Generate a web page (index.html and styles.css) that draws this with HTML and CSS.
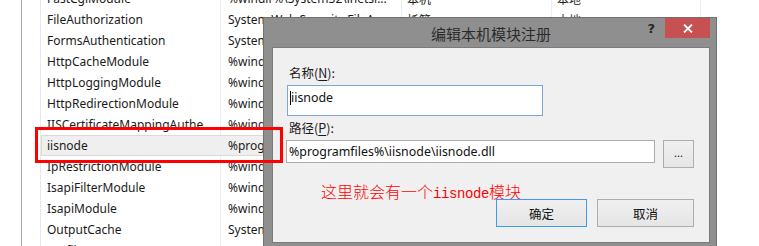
FILE: index.html
```html
<!DOCTYPE html>
<html lang="zh-CN">
<head>
<meta charset="utf-8">
<title>编辑本机模块注册</title>
<link rel="stylesheet" href="styles.css">
</head>
<body>
<div class="screen">
  <div class="pane">
    <div class="gutter"></div>
    <div class="list">
      <div class="row"><span class="c1">FastCgiModule</span><span class="c2">%windir%\System32\inetsr...</span><span class="c3">本机</span><span class="c4">本地</span></div>
      <div class="row"><span class="c1">FileAuthorization</span><span class="c2">System.Web.Security.FileA...</span><span class="c3">托管</span><span class="c4">本地</span></div>
      <div class="row"><span class="c1">FormsAuthentication</span><span class="c2">System.Web.Security.Form...</span><span class="c3">托管</span><span class="c4">本地</span></div>
      <div class="row"><span class="c1">HttpCacheModule</span><span class="c2">%windir%\System32\inetsr...</span><span class="c3">本机</span><span class="c4">本地</span></div>
      <div class="row"><span class="c1">HttpLoggingModule</span><span class="c2">%windir%\System32\inetsr...</span><span class="c3">本机</span><span class="c4">本地</span></div>
      <div class="row"><span class="c1">HttpRedirectionModule</span><span class="c2">%windir%\System32\inetsr...</span><span class="c3">本机</span><span class="c4">本地</span></div>
      <div class="row"><span class="c1">IISCertificateMappingAuthenticationModule</span><span class="c2">%windir%\System32\inetsr...</span><span class="c3">本机</span><span class="c4">本地</span></div>
      <div class="row selected"><span class="c1">iisnode</span><span class="c2">%programfiles%\iisnode\iis...</span><span class="c3">本机</span><span class="c4">本地</span></div>
      <div class="row"><span class="c1">IpRestrictionModule</span><span class="c2">%windir%\System32\inetsr...</span><span class="c3">本机</span><span class="c4">本地</span></div>
      <div class="row"><span class="c1">IsapiFilterModule</span><span class="c2">%windir%\System32\inetsr...</span><span class="c3">本机</span><span class="c4">本地</span></div>
      <div class="row"><span class="c1">IsapiModule</span><span class="c2">%windir%\System32\inetsr...</span><span class="c3">本机</span><span class="c4">本地</span></div>
      <div class="row"><span class="c1">OutputCache</span><span class="c2">System.Web.Caching.Output...</span><span class="c3">托管</span><span class="c4">本地</span></div>
      <div class="row"><span class="c1">Profile</span><span class="c2">System.Web.Profile.Profile...</span><span class="c3">托管</span><span class="c4">本地</span></div>
    </div>
  </div>

  <div class="dialog">
    <div class="titlebar">
      <span class="title">编辑本机模块注册</span>
      <span class="help">?</span>
      <span class="close"><svg width="10" height="9" viewBox="0 0 10 9"><path d="M1 0.5 L9 8.5 M9 0.5 L1 8.5" stroke="#fff" stroke-width="1.8" fill="none"/></svg></span>
    </div>
    <div class="client">
      <div class="label">名称(<u>N</u>):</div>
      <div class="input name"><span class="caret"></span>iisnode</div>
      <div class="label">路径(<u>P</u>):</div>
      <div class="pathrow">
        <div class="input path">%programfiles%\iisnode\iisnode.dll</div>
        <div class="btn browse">...</div>
      </div>
      <div class="note">这里就会有一个<span class="mono">iisnode</span>模块</div>
      <div class="buttons">
        <div class="btn ok">确定</div>
        <div class="btn cancel">取消</div>
      </div>
    </div>
  </div>

  <div class="mark"></div>
</div>
</body>
</html>
```
FILE: styles.css
```css
html, body {
  margin: 0;
  padding: 0;
  background: #fff;
}
.screen {
  position: relative;
  width: 759px;
  height: 246px;
  overflow: hidden;
  background: #fff;
  font-family: "Noto Sans", "Noto Sans CJK SC", sans-serif;
  font-size: 12px;
  color: #1a1a1a;
}

/* background list */
.pane {
  display: flex;
  height: 100%;
}
.gutter {
  width: 18px;
  margin-left: 21px;
  border-left: 1px solid #a9a9a9;
  border-right: 1px solid #e9e9e9;
  flex: none;
}
.list {
  margin-top: -12px;
  width: 660px;
}
.row {
  display: grid;
  grid-template-columns: 180px 181px 150px 149px;
  height: 21px;
  line-height: 21px;
  box-sizing: border-box;
  background-image:
    linear-gradient(#eaeff7, #eaeff7),
    linear-gradient(#eaeff7, #eaeff7),
    linear-gradient(#eaeff7, #eaeff7),
    linear-gradient(#eaeff7, #eaeff7);
  background-size: 1px 100%;
  background-repeat: no-repeat;
  background-position: 179px 0, 360px 0, 510px 0, 659px 0;
}
.row span {
  white-space: nowrap;
  overflow: hidden;
}
.c1 { padding-left: 6px; margin-right: 17px; }
.c2 { padding-left: 7px; margin-right: 1px; }
.c3, .c4 { padding-left: 5px; margin-right: 1px; font-family: "Noto Sans CJK SC", sans-serif; font-size: 12px; }
.row.selected {
  background-color: #efefef;
  box-shadow: inset 0 0 0 1px #dadada;
}

/* dialog */
.dialog {
  position: absolute;
  left: 263px;
  top: 17px;
  width: 454px;
  height: 240px;
  box-sizing: border-box;
  background: #8f8f8f;
  border: 1px solid #707070;
  padding: 0 6px 0 8px;
}
.titlebar {
  position: relative;
  height: 29px;
  display: flex;
  align-items: center;
  justify-content: center;
}
.title {
  font-family: "Noto Sans CJK SC", sans-serif;
  font-size: 15px;
  color: #2b2b2b;
  margin-top: 1px;
}
.help {
  position: absolute;
  right: 55px;
  top: 3px;
  font-family: "DejaVu Sans", sans-serif;
  font-weight: bold;
  font-size: 13px;
  color: #262626;
}
.close {
  position: absolute;
  right: 0;
  top: 0;
  width: 45px;
  height: 20px;
  background: #c75050;
  display: flex;
  align-items: center;
  justify-content: center;
}
.client {
  background: #f0f0f0;
  border: 1px solid #7b7b7b;
  height: 196px;
  box-sizing: border-box;
  padding: 17px 15px 0 13px;
}
.label {
  font-family: "Noto Sans CJK SC", sans-serif;
  font-size: 12.5px;
  line-height: 16px;
  height: 16px;
  padding-left: 3px;
  color: #1a1a1a;
}
.label u { text-decoration-thickness: 1px; text-underline-offset: 2px; }
.input {
  background: #fff;
  box-sizing: border-box;
  font-family: "Noto Sans", sans-serif;
  font-size: 12.4px;
  color: #111;
  white-space: nowrap;
  display: flex;
  align-items: center;
}
.input.name {
  width: 256px;
  height: 31px;
  border: 1px solid #7aa7d9;
  margin: 4px 0 4px 1px;
  padding-left: 2px;
  padding-bottom: 6px;
}
.caret {
  display: inline-block;
  width: 1px;
  height: 14px;
  background: #000;
  margin-top: 1px;
}
.pathrow {
  display: flex;
  align-items: flex-start;
  gap: 8px;
  margin-top: 4px;
}
.input.path {
  width: 369px;
  height: 23px;
  border: 1px solid #acacac;
  padding-left: 2px;
}
.btn {
  box-sizing: border-box;
  border: 1px solid #adadad;
  background: linear-gradient(#f0f0f0, #e5e5e5);
  display: flex;
  align-items: center;
  justify-content: center;
  font-family: "Noto Sans CJK SC", sans-serif;
  font-size: 12.5px;
  color: #111;
}
.browse {
  width: 31px;
  height: 28px;
  font-family: "Noto Sans", sans-serif;
  font-size: 11px;
  padding-bottom: 4px;
}
.note {
  margin: 15px 0 0 35px;
  height: 16px;
  line-height: 16px;
  font-family: "Noto Sans CJK SC", sans-serif;
  font-size: 16px;
  color: #ff0000;
  white-space: nowrap;
  font-weight: 300;
}
.note .mono {
  font-family: "Liberation Mono", monospace;
  font-size: 14px;
  letter-spacing: -0.4px;
}
.buttons {
  display: flex;
  justify-content: flex-end;
  gap: 10px;
}
.ok {
  width: 91px;
  height: 28px;
  border-color: #3c9af0;
}
.cancel {
  width: 97px;
  height: 28px;
}

/* red annotation box */
.mark {
  position: absolute;
  left: 35px;
  top: 127px;
  width: 248px;
  height: 36px;
  box-sizing: border-box;
  border: 3.5px solid #ff0000;
}
```
